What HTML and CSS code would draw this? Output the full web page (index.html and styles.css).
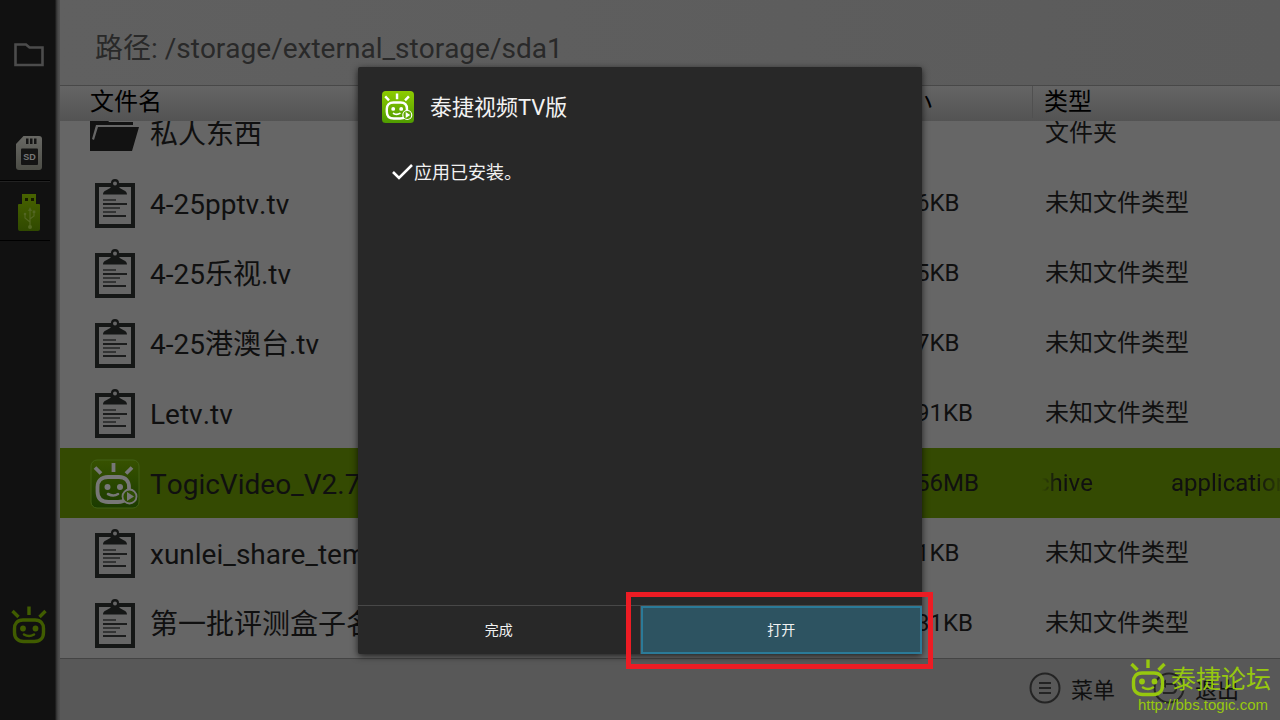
FILE: index.html
```html
<!DOCTYPE html>
<html lang="zh-CN">
<head>
<meta charset="utf-8">
<meta name="viewport" content="width=device-width, initial-scale=1">
<title>泰捷视频TV版</title>
<link rel="stylesheet" href="styles.css">
</head>
<body>
<svg class="defs" aria-hidden="true">
  <defs>
    <linearGradient id="app-green" x1="0" y1="0" x2="0" y2="1"><stop offset="0" stop-color="#8dcb00"/><stop offset="1" stop-color="#4f9c00"/></linearGradient>
    <linearGradient id="app-dim" x1="0" y1="0" x2="0" y2="1"><stop offset="0" stop-color="#375200"/><stop offset="1" stop-color="#1b3b00"/></linearGradient>
    <linearGradient id="sd-face" x1="0" y1="0" x2="0" y2="1"><stop offset="0" stop-color="#686864"/><stop offset="1" stop-color="#4c4d46"/></linearGradient>
    <linearGradient id="usb-face" x1="0" y1="0" x2="0" y2="1"><stop offset="0" stop-color="#486300"/><stop offset="1" stop-color="#304900"/></linearGradient>
    <symbol id="clipboard" viewBox="0 0 42 50">
      <path d="M3 6H39V47H3Z" fill="none" stroke="#151716" stroke-width="4"/>
      <path d="M9 15.500C9 11 14 11.500 17 8V4A4 4 0 0 1 25 4V8C28 11.500 33 11 33 15.500Z" fill="#151716"/>
      <circle cx="21" cy="4.500" r="2" fill="#666"/>
      <path d="M9 21H22M9 29H26M9 33H22" stroke="#252626" stroke-width="1.600"/>
      <path d="M9 25H33M9 37H32" stroke="#1c1d1d" stroke-width="1.900"/>
    </symbol>
    <symbol id="robot" viewBox="0 0 36 38">
      <g fill="none" stroke="currentColor" stroke-width="3.400" stroke-linecap="butt">
        <path d="M1.500 5L7.500 11M18 0.500V9M34.500 5L28.500 11"/>
        <path d="M12 14H24C30 14 32.500 18 32.500 22.500V26.500C32.500 32 29 35.500 23.500 35.500H12.500C7 35.500 3.500 32 3.500 26.500V22.500C3.500 18 6 14 12 14Z"/>
        <path d="M13 28.500Q18 31.500 23 28.500" stroke-width="2.600" stroke-linecap="round"/>
      </g>
      <circle cx="12" cy="22.500" r="2.900" fill="currentColor"/>
      <circle cx="24.500" cy="22.500" r="2.900" fill="currentColor"/>
    </symbol>
    <symbol id="app-face" viewBox="0 0 50 50">
      <g fill="none" stroke="currentColor" stroke-width="3.800" stroke-linecap="butt">
        <path d="M5 8.500L11 14.500M23.500 4V13M42 8.500L36 14.500"/>
        <path d="M18 18H29C36 18 39 22.500 39 28V32.500C39 39 35 43 28 43H18.500C11 43 7.500 39 7.500 32.500V28C7.500 22.500 11 18 18 18Z"/>
        <path d="M18 35Q23.500 38 28 35" stroke-width="2.600" stroke-linecap="round"/>
      </g>
      <circle cx="17.500" cy="28" r="3" fill="currentColor"/><circle cx="30" cy="28" r="3" fill="currentColor"/>
      <circle cx="39.500" cy="37.500" r="7" fill="var(--badge)" stroke="currentColor" stroke-width="1.800"/>
      <path d="M37 33V42L44 37.500Z" fill="currentColor"/>
    </symbol>
  </defs>
</svg>

<div class="screen">
  <nav class="rail" aria-label="存储设备">
    <button class="rail-item rail-folder" aria-label="文件夹">
      <svg width="30" height="24" viewBox="0 0 30 24"><path d="M1.500 1.500H12L15.500 4.500H28.500V22H1.500Z" fill="none" stroke="#4c4c4c" stroke-width="2.600"/></svg>
    </button>
    <button class="rail-item rail-sd" aria-label="SD">
      <svg width="26" height="34" viewBox="0 0 26 34">
        <path d="M7.500 0H23Q26 0 26 3V31Q26 34 23 34H3Q0 34 0 31V8Z" fill="url(#sd-face)"/>
        <path d="M10 2.500H12.500V8H10ZM14 2.500H16.500V8H14ZM18 2.500H20.500V8H18Z" fill="#151515"/>
        <rect x="5" y="12.500" width="17" height="16.500" rx="1" fill="#141414"/>
        <text x="13.500" y="24" class="sd-text" text-anchor="middle">SD</text>
      </svg>
    </button>
    <button class="rail-item rail-usb" aria-label="USB">
      <svg width="22" height="37" viewBox="0 0 22 37">
        <path d="M4 0H18V10H21Q22 10 22 11V35Q22 37 20 37H2Q0 37 0 35V11Q0 10 1 10H4Z" fill="url(#usb-face)"/>
        <path d="M7 4H10V7H7ZM13 4H16V7H13Z" fill="#151b00"/>
        <g fill="none" stroke="#526622" stroke-width="1.200"><path d="M12 15V33M12 28L7 24V20M12 25L16 22V18"/></g>
        <path d="M12 13L14 17H10Z" fill="#526622"/><circle cx="12" cy="33" r="2" fill="#526622"/><circle cx="7" cy="20" r="1.300" fill="#526622"/><path d="M14.700 16.500H17.300V19H14.700Z" fill="#526622"/>
      </svg>
    </button>
    <svg class="rail-logo" viewBox="0 0 36 38" aria-hidden="true"><use href="#robot"/></svg>
  </nav>

  <main class="browser">
    <header class="path">路径: /storage/external_storage/sda1</header>
    <table class="files">
      <thead>
        <tr><th>文件名</th><th>小</th><th>类型</th></tr>
      </thead>
      <tbody>
        <tr>
          <td class="name"><svg class="icon" viewBox="0 0 50 50" aria-hidden="true"><path d="M0 10H17L19 13H43V16H6L2 30L4 31L8 18H49L42 42H0Z" fill="#121212"/></svg><span>私人东西</span></td>
          <td></td><td>文件夹</td>
        </tr>
        <tr><td class="name"><svg class="icon" viewBox="0 0 42 50" aria-hidden="true"><use href="#clipboard"/></svg><span>4-25pptv.tv</span></td><td>6KB</td><td>未知文件类型</td></tr>
        <tr><td class="name"><svg class="icon" viewBox="0 0 42 50" aria-hidden="true"><use href="#clipboard"/></svg><span>4-25乐视.tv</span></td><td>5KB</td><td>未知文件类型</td></tr>
        <tr><td class="name"><svg class="icon" viewBox="0 0 42 50" aria-hidden="true"><use href="#clipboard"/></svg><span>4-25港澳台.tv</span></td><td>7KB</td><td>未知文件类型</td></tr>
        <tr><td class="name"><svg class="icon" viewBox="0 0 42 50" aria-hidden="true"><use href="#clipboard"/></svg><span>Letv.tv</span></td><td>91KB</td><td>未知文件类型</td></tr>
        <tr class="selected">
          <td class="name"><svg class="icon app-dim" viewBox="0 0 50 50" aria-hidden="true"><rect x="1" y="1" width="48" height="48" rx="6" fill="url(#app-dim)" stroke="#426115"/><use href="#app-face"/></svg><span>TogicVideo_V2.7</span></td>
          <td>56MB</td>
          <td class="marquee"><span>chive</span><span>application</span></td>
        </tr>
        <tr><td class="name"><svg class="icon" viewBox="0 0 42 50" aria-hidden="true"><use href="#clipboard"/></svg><span>xunlei_share_tem</span></td><td>1KB</td><td>未知文件类型</td></tr>
        <tr><td class="name"><svg class="icon" viewBox="0 0 42 50" aria-hidden="true"><use href="#clipboard"/></svg><span>第一批评测盒子名</span></td><td>31KB</td><td>未知文件类型</td></tr>
      </tbody>
    </table>
    <footer class="actions">
      <button class="action"><svg width="32" height="32" viewBox="0 0 32 32" aria-hidden="true"><circle cx="16" cy="16" r="14.500" fill="none" stroke="#242424" stroke-width="2"/><path d="M10 11H22M10 16H22M10 21H22" stroke="#242424" stroke-width="2.200"/></svg><span>菜单</span></button>
      <button class="action"><svg width="32" height="32" viewBox="0 0 32 32" aria-hidden="true"><circle cx="16" cy="16" r="14.500" fill="none" stroke="#242424" stroke-width="2"/><path d="M11 12H20Q23 12 23 16Q23 21 19 21H10" fill="none" stroke="#242424" stroke-width="2.200"/><path d="M13 7.500V16L7 12Z" fill="#242424"/></svg><span>退出</span></button>
    </footer>
  </main>
</div>

<div class="overlay">
  <section class="dialog" role="dialog" aria-labelledby="dialog-title">
    <header class="dialog-head">
      <svg class="app-icon" viewBox="0 0 50 50" aria-hidden="true"><rect width="50" height="50" rx="6" fill="url(#app-green)"/><use href="#app-face"/></svg>
      <h1 id="dialog-title">泰捷视频TV版</h1>
    </header>
    <p class="status"><svg width="22" height="20" viewBox="0 0 22 20" aria-hidden="true"><path d="M1 9L7 15L20 2" fill="none" stroke="#fff" stroke-width="2.600"/></svg>应用已安装。</p>
    <div class="buttons">
      <button class="done">完成</button>
      <div class="open-wrap">
        <button class="open">打开</button>
        <span class="callout"></span>
      </div>
    </div>
  </section>
</div>

<div class="watermark">
  <svg class="watermark-logo" viewBox="0 0 36 38" aria-hidden="true"><use href="#robot"/></svg>
  <strong>泰捷论坛</strong>
  <a href="http://bbs.togic.com">http://bbs.togic.com</a>
</div>
</body>
</html>
```

FILE: styles.css
```css
* {
  box-sizing: border-box;
}

body {
  margin: 0;
  height: 100vh;
  overflow: hidden;
  background: #5c5c5c;
  color: #101010;
  font-family: Roboto, "Noto Sans CJK SC", sans-serif;
  font-kerning: none;
}

button {
  margin: 0;
  padding: 0;
  border: 0;
  background: none;
  color: inherit;
  font: inherit;
}

svg {
  display: block;
  flex: none;
}

.defs {
  position: absolute;
  width: 0;
  height: 0;
}

.screen {
  display: flex;
  height: 100%;
}

/* Storage rail */
.rail {
  display: flex;
  flex: none;
  flex-direction: column;
  width: 60px;
  padding-right: 10px;
  background: linear-gradient(90deg, #111 0, #111 55px, #2c2c2c 56px, #484848 58px, #525252 60px);
}

.rail-item {
  display: flex;
  justify-content: center;
  padding-left: 8px;
}

.rail-folder {
  height: 121px;
  padding-top: 43px;
}

.rail-sd {
  height: 60px;
  padding-top: 15px;
  border-bottom: 1px solid #000;
}

.rail-usb {
  height: 60px;
  padding-top: 12px;
  border-top: 1px solid #222;
  border-bottom: 1px solid #000;
}

.sd-text {
  fill: #777;
  font: bold 9px "Liberation Sans", sans-serif;
}

.rail-logo {
  width: 36px;
  height: 38px;
  margin: auto 0 76px 11px;
  color: #405c00;
}

/* File browser */
.browser {
  display: flex;
  flex: 1;
  flex-direction: column;
  min-width: 0;
}

.path {
  height: 85px;
  padding: 29px 35px 0;
  color: #292929;
  font-size: 28px;
  line-height: 40px;
  background: linear-gradient(90deg, #606060, #5b5b5b);
}

.files {
  display: flex;
  flex: 1;
  flex-direction: column;
  min-height: 0;
  background: #666;
  font-size: 24px;
  line-height: 34px;
}

thead {
  display: block;
  flex: none;
  height: 36px;
  border-top: 1px solid #484848;
  background: linear-gradient(#656565, #535353);
}

tbody {
  display: flex;
  flex: 1;
  flex-direction: column;
  justify-content: flex-end;
  min-height: 0;
  overflow: hidden;
}

tr {
  display: grid;
  grid-template-columns: minmax(0, 1fr) 124px 248px;
  align-items: center;
}

th {
  padding: 0 0 0 11px;
  color: #000;
  font-weight: 400;
  line-height: 32px;
  text-align: left;
}

th:first-child {
  padding-left: 30px;
}

th:nth-child(2) {
  padding-left: 0;
}

th:last-child {
  border-left: 1px solid #505050;
}

tbody tr {
  flex: none;
  height: 70px;
}

td {
  padding: 0 0 0 8px;
  white-space: nowrap;
}

td:last-child {
  padding-left: 13px;
}

.name {
  display: flex;
  align-items: center;
  gap: 10px;
  padding: 2px 0 0 30px;
  font-size: 28px;
}

.name span {
  padding-top: 1px;
}

.icon {
  width: 50px;
  height: 50px;
}

.selected {
  background: #344a02;
}

.app-dim {
  --badge: #2d4d00;
  color: #777;
}

.marquee {
  display: flex;
  gap: 78px;
  overflow: hidden;
  -webkit-mask-image: linear-gradient(90deg, transparent 10px, #000 26px, #000 224px, transparent 256px);
  mask-image: linear-gradient(90deg, transparent 10px, #000 26px, #000 224px, transparent 256px);
}

td.marquee {
  padding-left: 5px;
}

.actions {
  display: flex;
  flex: none;
  align-items: center;
  justify-content: flex-end;
  gap: 38px;
  height: 62px;
  padding: 0 41px 3px 0;
  border-top: 1px solid #444;
  background: #585858;
  font-size: 22px;
}

.action {
  display: flex;
  align-items: center;
  gap: 10px;
}

/* Install dialog */
.overlay {
  position: absolute;
  inset: 0;
  display: flex;
  justify-content: center;
  padding: 67px 20px 66px;
}

.dialog {
  display: flex;
  flex-direction: column;
  width: 564px;
  border-radius: 2px;
  background: #282828;
  color: #f2f2f2;
  box-shadow: 0 2px 7px rgba(0, 0, 0, 0.7);
}

.dialog-head {
  display: flex;
  align-items: center;
  gap: 16px;
  padding: 23px 24px 0;
}

.app-icon {
  --badge: #62a900;
  width: 32px;
  height: 32px;
  color: #fff;
}

h1 {
  margin: 0;
  padding-top: 2px;
  font-size: 22px;
  font-weight: 400;
  line-height: 32px;
}

.status {
  display: flex;
  align-items: center;
  margin: 36px 0 0;
  padding-left: 34px;
  font-size: 18px;
  line-height: 26px;
}

.buttons {
  display: flex;
  height: 49px;
  margin-top: auto;
  border-top: 1px solid #484848;
  font-size: 14px;
}

.done {
  flex: 1;
  padding-bottom: 2px;
  border-right: 1px solid #484848;
}

.open-wrap {
  position: relative;
  display: flex;
  flex: 1;
}

.open {
  flex: 1;
  padding-bottom: 2px;
  border: 2px solid #2b7a98;
  background: #2d5361;
}

.callout {
  position: absolute;
  inset: -14px -11px -15px -15px;
  border: 5px solid #ed1c24;
  pointer-events: none;
}

/* Forum watermark */
.watermark {
  position: absolute;
  right: 9px;
  bottom: 7px;
  display: grid;
  grid-template-columns: 36px auto;
  column-gap: 5px;
  color: #97c80e;
}

.watermark-logo {
  width: 36px;
  height: 38px;
}

.watermark strong {
  align-self: end;
  font-size: 25px;
  font-weight: 400;
  line-height: 34px;
}

.watermark a {
  grid-column: 1 / -1;
  justify-self: end;
  padding-right: 3px;
  color: inherit;
  font: 15px/16px "Liberation Sans", sans-serif;
  text-decoration: none;
}
```
